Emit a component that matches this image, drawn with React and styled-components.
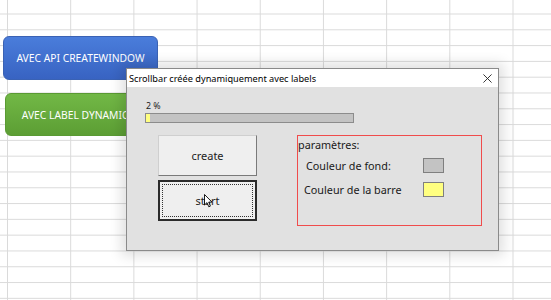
import styled, { createGlobalStyle } from "styled-components"

const Global = createGlobalStyle`
	html, body {
		margin: 0;
		padding: 0;
		background: #fff;
	}
	body {
		font-family: "Noto Sans", "Liberation Sans", sans-serif;
	}
`

const Sheet = styled.div`
	position: relative;
	width: 551px;
	height: 300px;
	overflow: hidden;
	background-color: #fff;
	background-image:
		linear-gradient(to right, #dadada 1px, transparent 1px),
		linear-gradient(to bottom, #dadada 1px, transparent 1px);
	background-size: 63.2px 15.8px;
	background-position: 7px 13.5px;
`

const Shape = styled.div`
	position: absolute;
	left: ${p => p.$x}px;
	top: ${p => p.$y}px;
	width: ${p => p.$w}px;
	height: ${p => p.$h}px;
	border-radius: 6px;
	display: flex;
	align-items: center;
	justify-content: center;
	color: #fff;
	font-family: "Noto Sans", sans-serif;
	font-size: 10.3px;
	white-space: nowrap;
	box-sizing: border-box;
	background: ${p => p.$color === "blue"
		? "linear-gradient(#4a7ddb, #3863c2)"
		: "linear-gradient(#72b846, #5c9e34)"};
	border: 1px solid ${p => p.$color === "blue" ? "#3a62b4" : "#5a9a33"};
`

const Window = styled.div`
	position: absolute;
	left: 126px;
	top: 68px;
	width: 373px;
	height: 183px;
	box-sizing: border-box;
	border: 1px solid #8a8a8a;
	background: #e1e1e1;
	box-shadow: 0 0 12px 5px rgba(0, 0, 0, 0.12);
	display: flex;
	flex-direction: column;
	font-family: "Noto Sans", sans-serif;
	color: #1a1a1a;
`

const TitleBar = styled.div`
	height: 18px;
	background: #fff;
	display: flex;
	align-items: center;
	justify-content: space-between;
	padding: 0 6px 0 2px;
	font-size: 9.2px;
	color: #000;
`

const Close = styled.svg`
	width: 9px;
	height: 9px;
`

const Body = styled.div`
	flex: 1;
	padding: 14px 0 0 18px;
	display: flex;
	flex-direction: column;
`

const Percent = styled.div`
	font-size: 8.8px;
	line-height: 11px;
	padding-left: 1px;
	height: 12px;
`

const Track = styled.div`
	width: 209px;
	height: 10px;
	box-sizing: border-box;
	border: 1px solid #8c8c8c;
	background: #c3c3c3;
	display: flex;
`

const Fill = styled.div`
	height: 100%;
	background: #ffff80;
`

const Row = styled.div`
	display: flex;
	margin-top: 12px;
`

const Buttons = styled.div`
	display: flex;
	flex-direction: column;
	gap: 4px;
	margin-left: 13px;
`

const Button = styled.div`
	position: relative;
	width: 99px;
	height: 41px;
	box-sizing: border-box;
	background: #efefef;
	border: 1px solid ${p => p.$focused ? "#2b2b2b" : "#cfcfcf"};
	border-right-color: ${p => p.$focused ? "#2b2b2b" : "#7a7a7a"};
	border-bottom-color: ${p => p.$focused ? "#2b2b2b" : "#7a7a7a"};
	${p => p.$focused && "border-width: 2px;"}
	display: flex;
	align-items: center;
	justify-content: center;
	font-size: 11px;
	color: #222;
`

const FocusRing = styled.div`
	position: absolute;
	inset: 2px;
	border: 1px dotted #333;
	pointer-events: none;
`

const Cursor = styled.svg`
	position: absolute;
	left: 44px;
	top: 12px;
	width: 9px;
	height: 14px;
`

const Frame = styled.div`
	margin-left: 40px;
	width: 185px;
	height: 91px;
	box-sizing: border-box;
	border: 1px solid #f04c4c;
	font-size: 10.8px;
	display: flex;
	flex-direction: column;
`

const FrameTitle = styled.div`
	line-height: 14px;
	margin-top: 2px;
`

const Param = styled.div`
	display: flex;
	align-items: center;
	height: 15px;
	margin-top: ${p => p.$top}px;
	padding-left: ${p => p.$indent}px;
`

const ParamLabel = styled.span`
	width: ${p => p.$w}px;
`

const Swatch = styled.div`
	width: 21px;
	height: 15px;
	box-sizing: border-box;
	border: 1px solid #7f7f7f;
	background: ${p => p.$color};
`

export default function App() {
	const progress = 2

	return (
		<Sheet>
			<Global />
			<Shape $x={3} $y={36} $w={155} $h={44} $color="blue">AVEC API CREATEWINDOW</Shape>
			<Shape $x={5} $y={93} $w={155} $h={43} $color="green">AVEC LABEL DYNAMIQUE</Shape>

			<Window>
				<TitleBar>
					<span>Scrollbar créée dynamiquement avec labels</span>
					<Close viewBox="0 0 10 10">
						<path d="M0.5 0.5 L9.5 9.5 M9.5 0.5 L0.5 9.5" stroke="#222" strokeWidth="1" />
					</Close>
				</TitleBar>
				<Body>
					<Percent>{progress} %</Percent>
					<Track>
						<Fill style={{ width: `${progress}%` }} />
					</Track>
					<Row>
						<Buttons>
							<Button>create</Button>
							<Button $focused>
								<FocusRing />
								start
								<Cursor viewBox="0 0 9 14">
									<path d="M0.5 0.5 L0.5 11 L3 8.6 L4.8 12.8 L6.4 12.1 L4.7 8.1 L8 8.1 Z" fill="#fff" stroke="#000" strokeWidth="0.9" strokeLinejoin="round" />
								</Cursor>
							</Button>
						</Buttons>
						<Frame>
							<FrameTitle>paramètres:</FrameTitle>
							<Param $top={6} $indent={8}>
								<ParamLabel $w={117}>Couleur de fond:</ParamLabel>
								<Swatch $color="#c3c3c3" />
							</Param>
							<Param $top={9} $indent={6}>
								<ParamLabel $w={119}>Couleur de la barre</ParamLabel>
								<Swatch $color="#ffff80" />
							</Param>
						</Frame>
					</Row>
				</Body>
			</Window>
		</Sheet>
	)
}
